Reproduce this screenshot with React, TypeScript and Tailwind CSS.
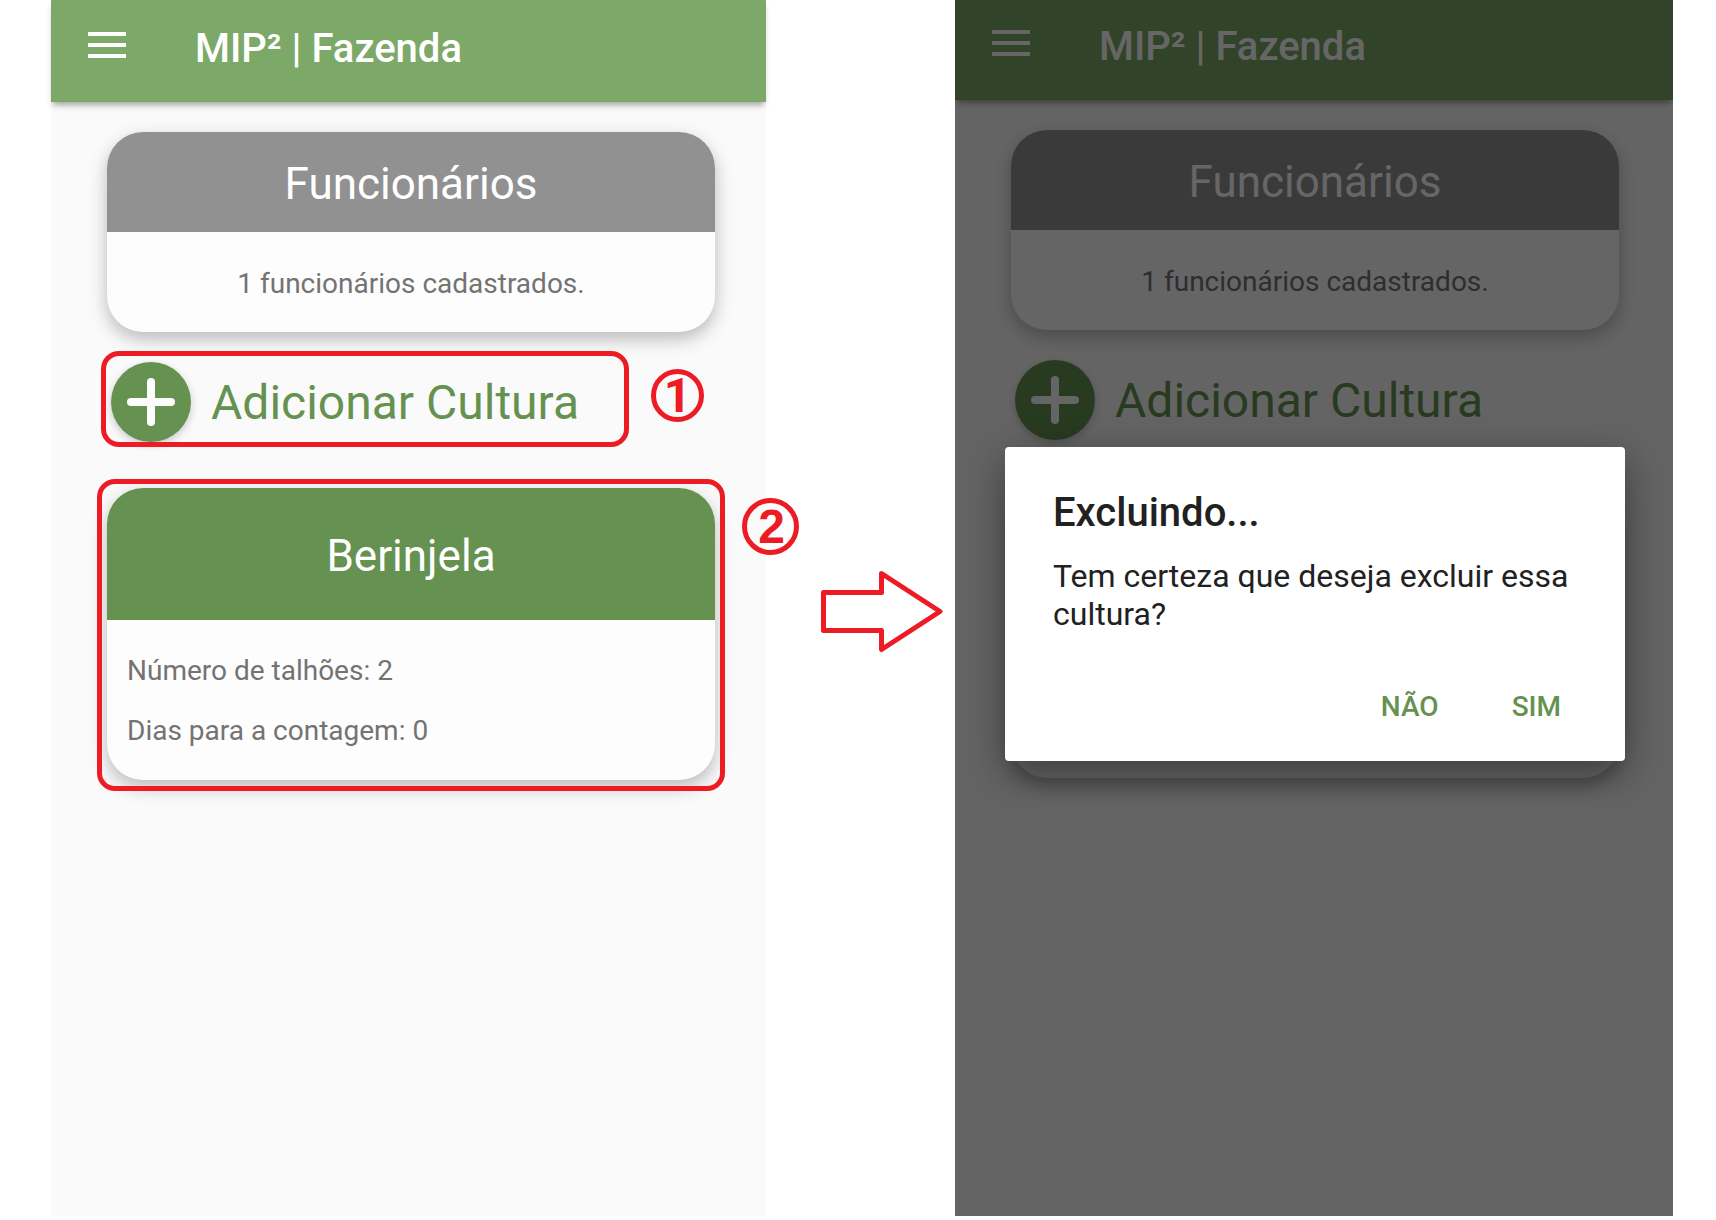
import type { ReactNode } from "react";

function MenuIcon() {
  return (
    <svg className="h-[26px] w-[38px]" viewBox="0 0 38 26" fill="currentColor" aria-hidden="true">
      <rect width="38" height="4" />
      <rect y="11" width="38" height="4" />
      <rect y="22" width="38" height="4" />
    </svg>
  );
}

function PlusCircle() {
  return (
    <span className="flex size-20 shrink-0 items-center justify-center rounded-full bg-[#659251] text-[#fdfdfd] shadow-[0_3px_8px_rgba(0,0,0,0.2)]">
      <svg className="size-12" viewBox="0 0 48 48" fill="currentColor" aria-hidden="true">
        <rect y="20" width="48" height="8" rx="4" />
        <rect x="20" width="8" height="48" rx="4" />
      </svg>
    </span>
  );
}

function Header({ tall }: { tall?: boolean }) {
  return (
    <header
      className={`flex bg-[#7ca968] pb-7 pl-[37px] text-white shadow-[0_5px_6px_-2px_rgba(0,0,0,0.35)] ${
        tall ? "pt-6" : "pt-[22px]"
      }`}
    >
      <button type="button" aria-label="Menu" className="mt-2 h-[26px]">
        <MenuIcon />
      </button>
      <h1 className="ml-[69px] text-[40px] leading-[50px] font-medium">MIP² | Fazenda</h1>
    </header>
  );
}

function Card({ children }: { children: ReactNode }) {
  return (
    <section className="overflow-hidden rounded-[36px] bg-[#fdfdfd] text-[28px] text-[#737373] shadow-[0_7px_18px_rgba(0,0,0,0.26)]">
      {children}
    </section>
  );
}

function Outline({ className }: { className: string }) {
  return (
    <span
      aria-hidden="true"
      className={`pointer-events-none absolute rounded-[18px] border-5 border-[#ed1c24] ${className}`}
    />
  );
}

function Badge({ children, className }: { children: ReactNode; className: string }) {
  return (
    <span
      className={`absolute flex items-center justify-center rounded-full border-5 border-[#ed1c24] text-[48px] leading-none font-bold text-[#ed1c24] ${className}`}
    >
      {children}
    </span>
  );
}

function Farm({ annotated }: { annotated?: boolean }) {
  return (
    <>
      <Header tall={annotated} />
      <div className={`pt-[30px] pl-14 ${annotated ? "pr-[51px]" : "pr-[54px]"}`}>
        <Card>
          <h2 className="flex h-[100px] items-center justify-center bg-[#919191] pt-1 text-[44px] text-white">
            Funcionários
          </h2>
          <p className="flex h-[100px] items-center justify-center pt-1">1 funcionários cadastrados.</p>
        </Card>

        <div className="relative mt-[30px] ml-1 w-fit">
          <button type="button" className="flex items-center gap-5 text-[48px] leading-none text-[#659251]">
            <PlusCircle />
            <span className="pt-0.5">Adicionar Cultura</span>
          </button>
          {annotated && (
            <>
              <Outline className="-top-[11px] -right-[50px] -bottom-[5px] -left-[10px]" />
              <Badge className="top-[7px] -right-[125px] size-[53px]">1</Badge>
            </>
          )}
        </div>

        <div className="relative mt-[46px]">
          <Card>
            <h2 className="flex h-[132px] items-center justify-center bg-[#659251] pt-1 text-[44px] text-white">
              Berinjela
            </h2>
            <div className="px-5 pt-[21px] pb-[19px] leading-[60px]">
              <p>Número de talhões: 2</p>
              <p>Dias para a contagem: 0</p>
            </div>
          </Card>
          {annotated && (
            <>
              <Outline className="-top-[9px] -right-[10px] -bottom-[11px] -left-[10px]" />
              <Badge className="top-[10px] -right-[84px] size-[57px] pl-0.5 font-['Liberation_Sans',sans-serif]">
                2
              </Badge>
            </>
          )}
        </div>
      </div>
    </>
  );
}

function ConfirmDialog() {
  return (
    <div className="absolute inset-0 flex items-center bg-black/60 pr-12 pb-2 pl-[50px]">
      <div
        role="dialog"
        aria-labelledby="dialog-title"
        className="w-full rounded-[4px] bg-white px-12 pt-[42px] pb-[34px] text-[#212121] shadow-[0_12px_40px_rgba(0,0,0,0.4)]"
      >
        <h2 id="dialog-title" className="text-[40px] leading-[48px] font-medium">
          Excluindo...
        </h2>
        <p className="mt-5 text-[32px] leading-[38px]">Tem certeza que deseja excluir essa cultura?</p>
        <div className="mt-[54px] flex justify-end gap-[73px] pr-4 text-[28px] leading-10 font-medium text-[#659251]">
          <button type="button">NÃO</button>
          <button type="button">SIM</button>
        </div>
      </div>
    </div>
  );
}

export default function App() {
  return (
    <main className="grid min-h-screen grid-cols-[715fr_189px_718fr] bg-white pr-[43px] pb-1 pl-[51px] font-[Roboto,sans-serif]">
      <div className="bg-[#fafafa]">
        <Farm annotated />
      </div>
      <div className="flex items-start justify-end pt-[570px] pr-3">
        <svg className="h-[83px] w-[123px]" viewBox="0 0 123 83" fill="none" aria-hidden="true">
          <path
            d="M3.5 22.5H61.5V3.5L120 41.5L61.5 79.5V60.5H3.5Z"
            stroke="#ed1c24"
            strokeWidth="5"
            strokeLinejoin="round"
          />
        </svg>
      </div>
      <div className="relative overflow-hidden bg-[#fafafa]">
        <Farm />
        <ConfirmDialog />
      </div>
    </main>
  );
}
